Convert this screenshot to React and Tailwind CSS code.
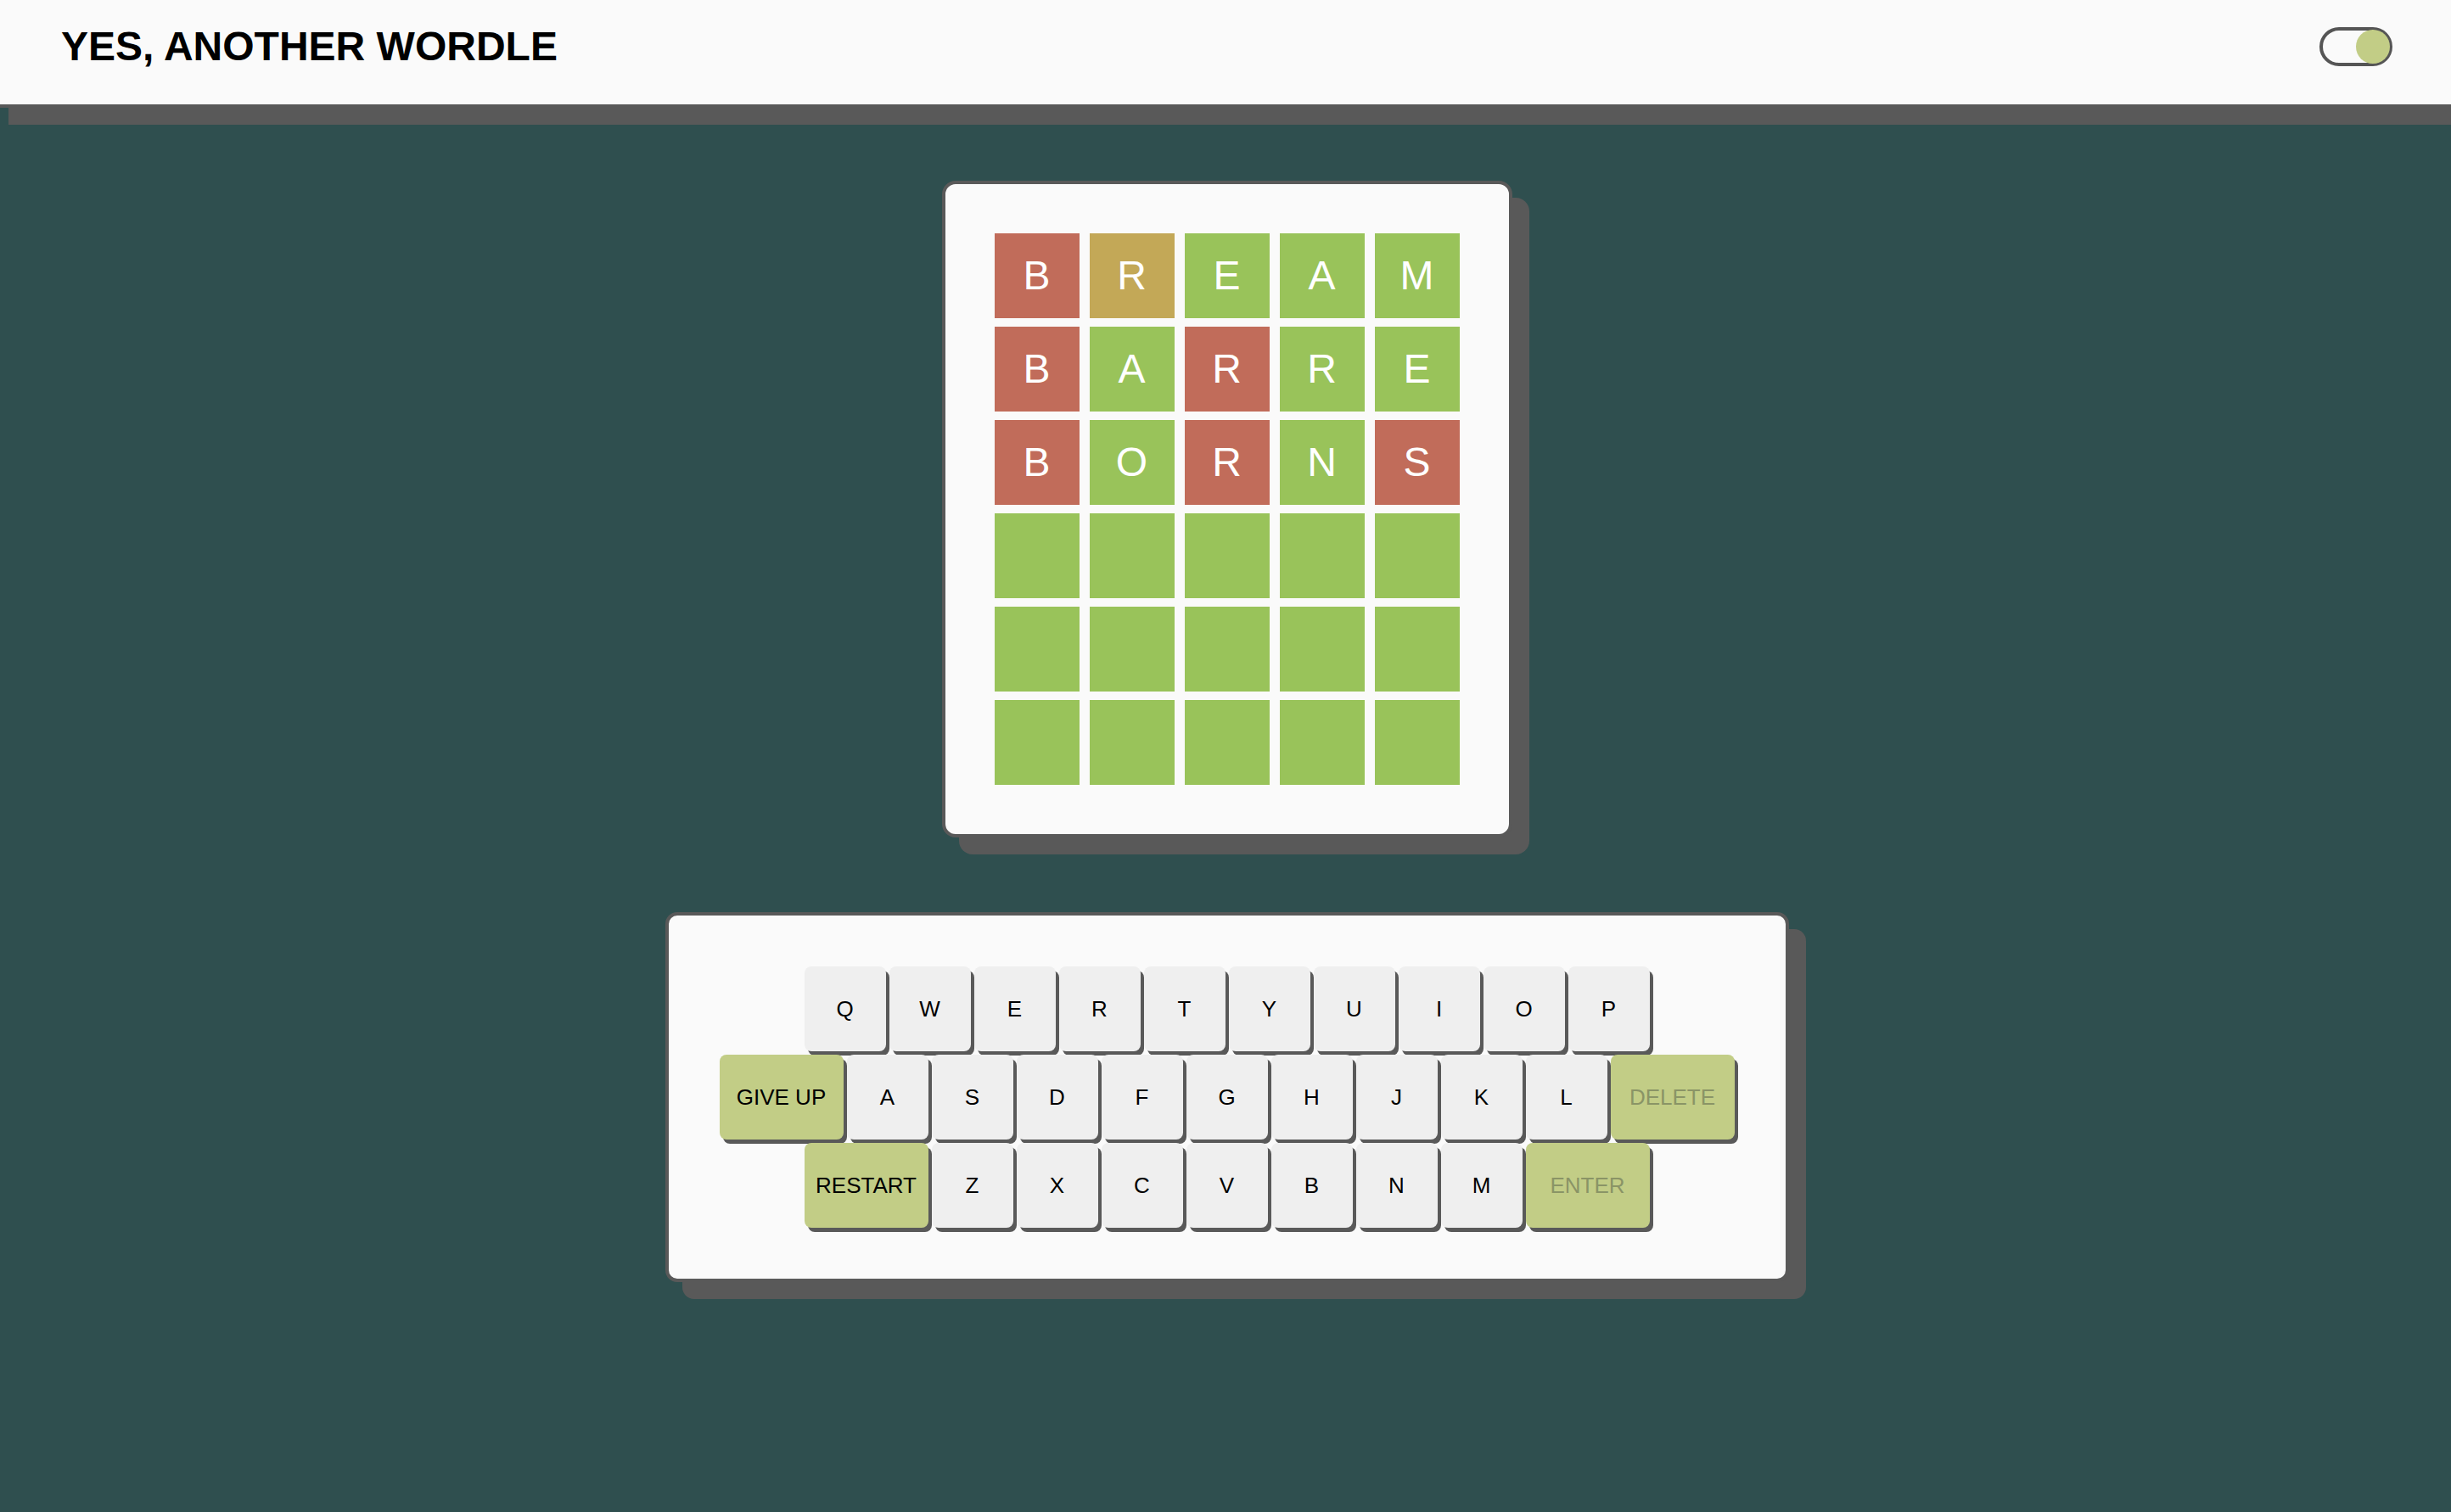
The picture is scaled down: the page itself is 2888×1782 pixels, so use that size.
import React, { useState } from "react";

const ROWS = [
  [
    ["B", "bad"],
    ["R", "near"],
    ["E", "good"],
    ["A", "good"],
    ["M", "good"],
  ],
  [
    ["B", "bad"],
    ["A", "good"],
    ["R", "bad"],
    ["R", "good"],
    ["E", "good"],
  ],
  [
    ["B", "bad"],
    ["O", "good"],
    ["R", "bad"],
    ["N", "good"],
    ["S", "bad"],
  ],
];

const tileColor = {
  bad: "bg-[#c16c5a]",
  near: "bg-[#c3a857]",
  good: "bg-[#99c35a]",
};

const font = { fontFamily: '"Liberation Sans", Arial, sans-serif' };

function Key({ label, wide = false, muted = false }) {
  return (
    <button
      type="button"
      className={`h-[100px] rounded-lg shadow-[4px_5px_0_#595959] flex items-center justify-center text-[26px] leading-none ${
        wide ? "w-[146px] bg-[#c2cd86]" : "w-[96px] bg-[#efefef]"
      } ${muted ? "text-[#8a9466]" : "text-black"}`}
    >
      {label}
    </button>
  );
}

export default function App() {
  const [dark, setDark] = useState(true);

  // pad the guesses out to six rows
  const board = [...ROWS];
  while (board.length < 6) board.push(Array(5).fill(["", "good"]));

  return (
    <div className="min-h-screen bg-[#2f4f4f] flex flex-col" style={font}>
      {/* Header */}
      <header className="h-[127px] bg-[#fafafa] border-b-4 border-[#595959] shadow-[10px_20px_0_#595959] flex items-start justify-between pl-[72px] pr-[69px] pt-[31px]">
        <h1 className="text-[48px] font-bold leading-none text-black">
          YES, ANOTHER WORDLE
        </h1>
        <button
          type="button"
          onClick={() => setDark(!dark)}
          className="relative w-[86px] h-[46px] mt-px rounded-full border-4 border-[#555555] bg-[#fafafa]"
        >
          <span
            className={`absolute top-[-1px] w-[40px] h-[40px] rounded-full bg-[#c2cd86] ${
              dark ? "right-[-1px]" : "left-[-1px]"
            }`}
          />
        </button>
      </header>

      <main className="flex flex-col items-center pt-[86px] pb-[60px] pl-[3px]">
        {/* Board */}
        <div className="bg-[#fafafa] border-4 border-[#595959] rounded-[16px] shadow-[20px_20px_0_#595959] p-[58px]">
          <div className="grid grid-cols-5 gap-x-[12px] gap-y-[10px]">
            {board.map((row, r) =>
              row.map(([ch, state], c) => (
                <div
                  key={`${r}-${c}`}
                  className={`w-[100px] h-[100px] flex items-center justify-center text-white text-[48px] leading-none ${tileColor[state]}`}
                >
                  {ch}
                </div>
              ))
            )}
          </div>
        </div>

        {/* Keyboard */}
        <div className="mt-[88px] bg-[#fafafa] border-4 border-[#595959] rounded-[14px] shadow-[20px_20px_0_#595959] p-[60px] flex flex-col gap-[4px]">
          <div className="flex justify-center gap-[4px]">
            {"QWERTYUIOP".split("").map((k) => (
              <Key key={k} label={k} />
            ))}
          </div>
          <div className="flex justify-center gap-[4px]">
            <Key label="GIVE UP" wide />
            {"ASDFGHJKL".split("").map((k) => (
              <Key key={k} label={k} />
            ))}
            <Key label="DELETE" wide muted />
          </div>
          <div className="flex justify-center gap-[4px]">
            <Key label="RESTART" wide />
            {"ZXCVBNM".split("").map((k) => (
              <Key key={k} label={k} />
            ))}
            <Key label="ENTER" wide muted />
          </div>
        </div>
      </main>
    </div>
  );
}
